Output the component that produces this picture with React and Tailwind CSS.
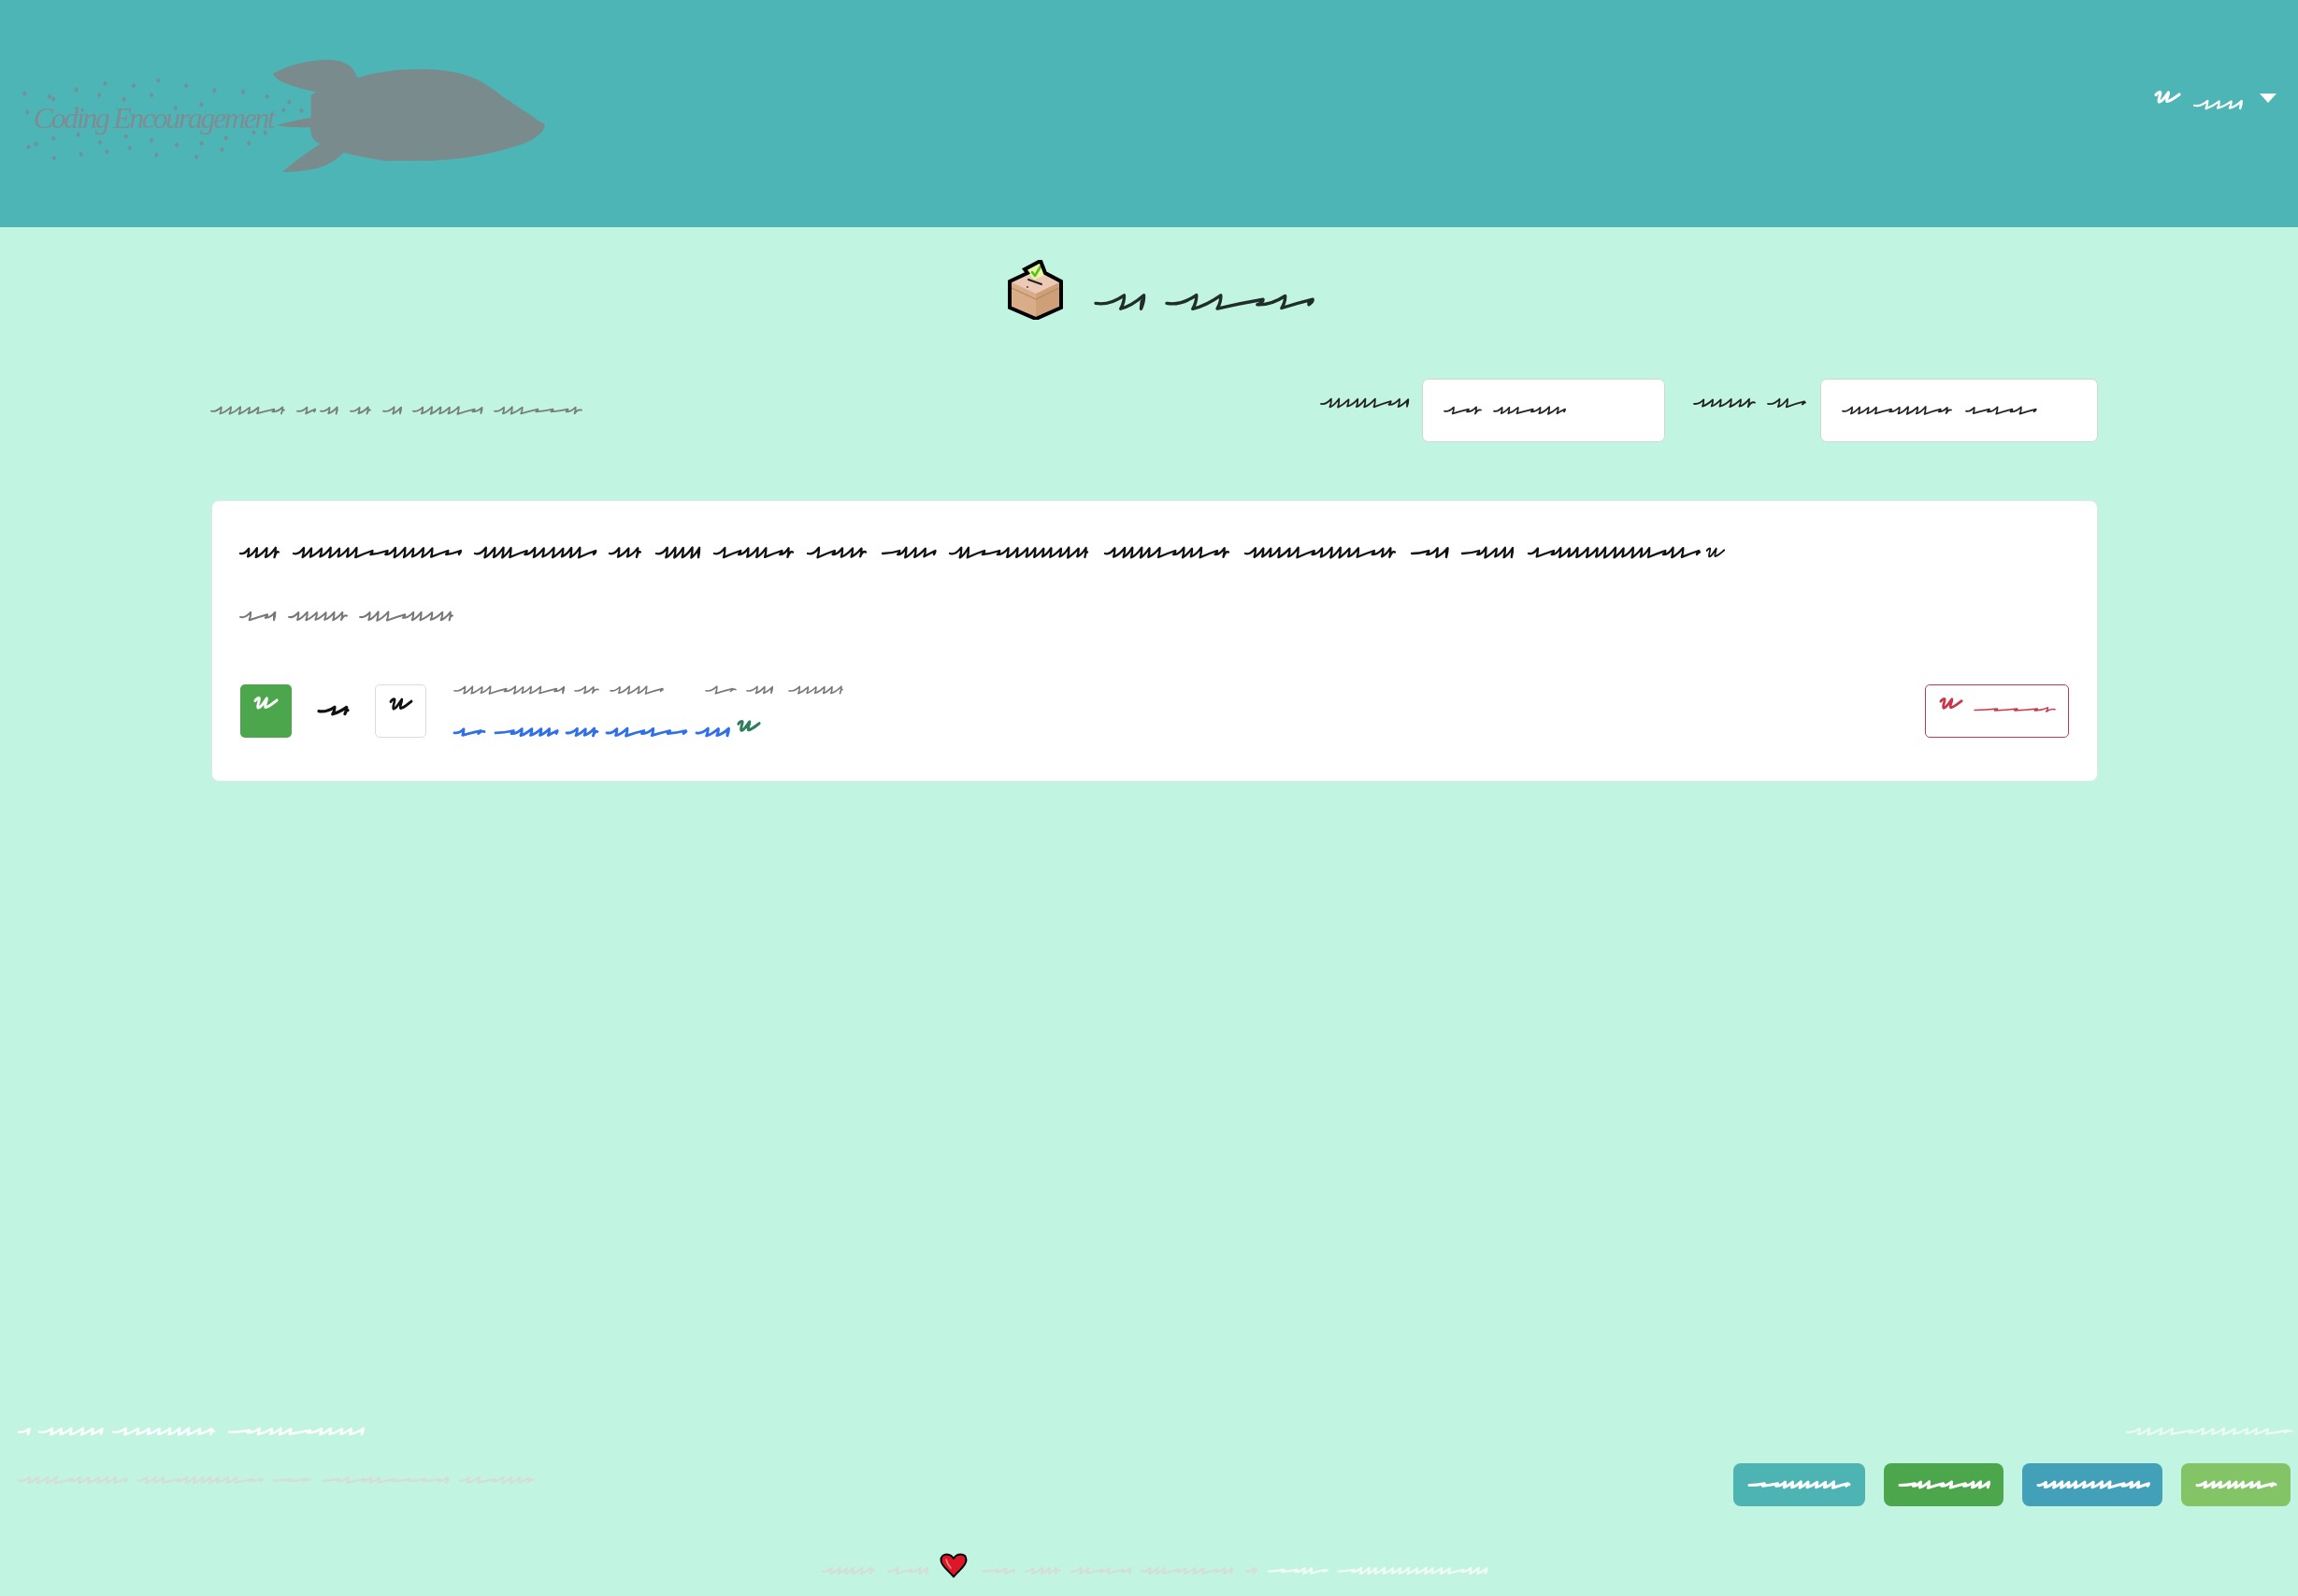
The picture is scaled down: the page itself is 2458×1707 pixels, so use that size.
import React from "react";

function rnd(s) {
  const v = Math.sin(s * 12.9898 + 4.1414) * 43758.5453;
  return v - Math.floor(v);
}

function wordPath(x0, x1, cy, amp, period, seed) {
  const base = period * 1.05;
  let x = x0;
  let i = 0;
  let d = `M${x0.toFixed(1)} ${(cy + amp * 0.2).toFixed(1)}`;
  while (x1 - x > base * 0.8) {
    const flat = rnd(seed * 2 + i * 2.3) < 0.22;
    const a = amp * (flat ? 0.4 : 0.85 + rnd(seed + i * 3.1) * 0.25);
    const s = Math.min(base * (flat ? 1.7 : 0.85 + rnd(seed + i * 1.7) * 0.3), x1 - x);
    d += ` Q${(x + s * 0.55).toFixed(1)} ${(cy + a * 0.55).toFixed(1)} ${(x + s * 1.14).toFixed(1)} ${(cy - a).toFixed(1)}`;
    d += ` Q${(x + s * 1.16).toFixed(1)} ${(cy - a * 0.1).toFixed(1)} ${(x + s).toFixed(1)} ${(cy + a).toFixed(1)}`;
    x += s;
    i++;
  }
  d += ` Q${((x + x1) / 2).toFixed(1)} ${(cy - amp * 0.5).toFixed(1)} ${x1.toFixed(1)} ${(cy - amp * 0.1).toFixed(1)}`;
  return d;
}

function Line({ words, color = "#222", sw = 2, amp = 3.5, period = 8, h = 16 }) {
  const o = words[0][0];
  const w = words[words.length - 1][1] - o;
  return (
    <svg width={w} height={h} viewBox={`0 0 ${w} ${h}`} className="block shrink-0 overflow-visible">
      {words.map(([a, b], i) => (
        <path
          key={i}
          d={wordPath(a - o, b - o, h / 2, amp, period, a * 0.37 + b * 0.11)}
          fill="none"
          stroke={color}
          strokeWidth={sw}
          strokeLinecap="round"
          strokeLinejoin="round"
        />
      ))}
    </svg>
  );
}

function Glyph({ color, w = 27, h = 14, sw = 3.4 }) {
  return (
    <svg width={w} height={h} viewBox="0 0 28 14" preserveAspectRatio="none" className="block shrink-0 overflow-visible">
      <path
        d="M1 4.500 C2.500 2.500 5 1 6 2 C6.500 4.500 3 10 4.500 12 C8 12.500 12 5 15 2 C15.500 5 11.500 10 13.500 11.500 C17 11.500 22 7.500 27 4"
        fill="none"
        stroke={color}
        strokeWidth={sw}
        strokeLinecap="round"
        strokeLinejoin="round"
      />
    </svg>
  );
}

const stars = [
  [65, 300], [130, 310], [200, 288], [275, 268], [350, 275], [415, 258], [488, 275], [562, 290], [637, 295], [700, 310],
  [758, 328], [140, 318], [260, 305], [325, 318], [397, 305], [460, 347], [528, 335], [743, 353], [790, 355], [72, 360],
  [140, 443], [205, 432], [330, 437], [262, 457], [397, 450], [463, 465], [528, 460], [592, 443], [652, 460], [665, 425],
  [695, 425], [75, 472], [95, 462], [142, 507], [212, 495], [280, 487], [340, 475], [410, 497], [515, 503], [582, 480],
];

function Logo() {
  return (
    <div className="relative w-[640px] h-[243px] shrink-0">
      <svg width="640" height="243" viewBox="0 0 1568 729" preserveAspectRatio="none" className="block">
        <path
          d="M715 237 C745 215 800 192 860 192 C895 192 925 205 937 250 C980 232 1040 222 1100 222 C1170 222 1215 235 1250 255 C1290 280 1310 305 1330 320 C1370 352 1400 378 1428 400 C1425 425 1405 445 1370 462 C1300 490 1220 512 1130 515 L1010 516 C970 510 930 498 900 490 C880 515 860 530 830 540 C800 548 770 552 740 552 C760 530 790 500 840 462 C825 455 815 445 813 408 C780 410 750 408 725 402 C755 392 790 382 815 378 L815 305 L830 295 C800 288 760 275 735 260 C725 252 718 245 715 237 Z"
          fill="#798b8c"
        />
        {stars.map(([x, y], i) => (
          <path
            key={i}
            d={`M${x} ${y - 9} L${x + 6} ${y} L${x} ${y + 9} L${x - 6} ${y} Z`}
            fill="#73909a"
          />
        ))}
      </svg>
      <div className="absolute left-[36px] top-[108px] text-[32px] leading-[36px] italic text-[#7c8f97] whitespace-nowrap tracking-[-2.4px] font-['Liberation_Serif',serif]">
        Coding Encouragement
      </div>
    </div>
  );
}

function BallotBox() {
  return (
    <svg width="60" height="64" viewBox="18 12 60 64" preserveAspectRatio="none" className="block shrink-0">
      <polygon points="22,36 48,24 73,36 73,62 48,74 22,62" fill="#d8ad88" />
      <polygon points="48,48 73,36 73,62 48,74" fill="#cf9f78" />
      <polygon points="22,36 48,24 73,36 48,48" fill="#ecc9b4" />
      <path d="M22 42 L48 54 L73 42" fill="none" stroke="#b58a66" strokeWidth="1.200" />
      <polygon points="38,24 52,16 58,28 46,33" fill="#e9f7a4" />
      <path d="M44 25 L47 29 L53 19" fill="none" stroke="#58bd26" strokeWidth="2.600" strokeLinecap="round" strokeLinejoin="round" />
      <path d="M40 33 L54 38" stroke="#222" strokeWidth="2" strokeLinecap="round" />
      <circle cx="39" cy="41" r="1" fill="#444" />
      <path
        d="M36 22 L53 13 L58 26 L75 35 L75 63 L48 75 L20 63 L20 35 L39 26 Z"
        fill="none"
        stroke="#000"
        strokeWidth="4"
        strokeLinejoin="miter"
      />
    </svg>
  );
}

function Heart() {
  return (
    <svg width="30" height="27" viewBox="0 0 30 27" className="block shrink-0">
      <path d="M15 25.500 C10 19 1.500 14 1.500 7.500 C1.500 3.500 4.500 1.500 7.500 1.500 C11 1.500 13.500 3.500 15 6 C16.500 3.500 19 1.500 22.500 1.500 C26 1.500 28.500 3.500 28.500 7.500 C28.500 14 20 19 15 25.500 Z" fill="#dd1729" stroke="#000" strokeWidth="2" strokeLinejoin="round" />
      <path d="M7 7 C8 11 10 14 12 16" fill="none" stroke="#f08a80" strokeWidth="1.600" strokeLinecap="round" />
    </svg>
  );
}

function FooterButton({ bg, w, words }) {
  return (
    <div className={`h-[46px] rounded-lg flex items-center justify-center ${bg} ${w}`}>
      <Line words={words} color="#fff" sw={3} amp={3} period={8} />
    </div>
  );
}

export default function App() {
  return (
    <div className="min-h-[1707px] bg-[#c1f5e1] flex flex-col font-['Liberation_Sans',sans-serif]">
      <header className="h-[243px] bg-[#4db5b5] flex justify-between">
        <Logo />
        <div className="flex items-start pt-[97px] pr-[23px]">
          <Glyph color="#fff" w={27} h={14} sw={3.2} />
          <div className="ml-[15px] mt-[7px]">
            <Line words={[[2347, 2397]]} color="#fff" sw={2.2} amp={4} period={11} />
          </div>
          <svg width="18" height="10" viewBox="0 0 18 10" className="ml-[20px] mt-[3px] block">
            <polygon points="0,0 18,0 9,10" fill="#fff" />
          </svg>
        </div>
      </header>

      <main className="ml-[226px] w-[2018px] flex flex-col">
        <div className="pt-[35px] pl-[8px] flex justify-center items-center gap-[34px]">
          <BallotBox />
          <div className="mt-[25px]">
            <Line words={[[1172, 1222], [1248, 1400]]} color="#1f2e2b" sw={3.4} amp={7} period={24} h={20} />
          </div>
        </div>

        <div className="mt-[63px] h-[68px] flex items-center justify-between">
          <Line
            words={[[226, 304], [318, 336], [343, 361], [375, 396], [410, 428], [442, 515], [529, 622]]}
            color="#777f7c"
            sw={1.8}
            amp={3.6}
            period={9}
          />
          <div className="flex items-center">
            <div className="mb-[16px]">
              <Line words={[[1414, 1506]]} color="#222" sw={1.8} amp={4.4} period={9} />
            </div>
            <div className="ml-[16px] w-[260px] h-[68px] bg-white border border-[#d0d8d5] rounded-[7px] flex items-center pl-[23px]">
              <Line words={[[1545, 1584], [1598, 1673]]} color="#222" sw={1.7} amp={3.6} period={8.5} />
            </div>
            <div className="ml-[31px] mb-[16px]">
              <Line words={[[1812, 1877], [1891, 1931]]} color="#222" sw={1.8} amp={4} period={9.5} />
            </div>
            <div className="ml-[16px] w-[297px] h-[68px] bg-white border border-[#d0d8d5] rounded-[7px] flex items-center pl-[23px]">
              <Line words={[[1970, 2086], [2102, 2175]]} color="#222" sw={1.7} amp={3.6} period={8.5} />
            </div>
          </div>
        </div>

        <section className="mt-[62px] h-[301px] bg-white rounded-lg border border-[#dfe8e4] px-[30px] pt-[47px] flex flex-col">
          <div className="flex items-center">
            <Line
              words={[
                [257, 298], [314, 491], [508, 635], [652, 685], [702, 747], [764, 848], [864, 926], [944, 999],
                [1016, 1163], [1182, 1314], [1332, 1492], [1510, 1547], [1564, 1618], [1635, 1818],
              ]}
              color="#111"
              sw={2.3}
              amp={5}
              period={9}
            />
            <div className="ml-[7px]">
              <Glyph color="#111" w={20} h={12} sw={2.4} />
            </div>
          </div>
          <div className="mt-[52px]">
            <Line words={[[257, 293], [309, 371], [385, 484]]} color="#777" sw={2} amp={4.4} period={9.5} />
          </div>

          <div className="mt-[65px] flex justify-between">
            <div className="flex">
              <div className="w-[55px] h-[57px] rounded-[5px] bg-[#4ca64c] flex justify-center pt-[13px]">
                <Glyph color="#fff" w={25} h={14} sw={3.2} />
              </div>
              <div className="ml-[29px] mt-[20px]">
                <Line words={[[341, 372]]} color="#111" sw={3.2} amp={3.6} period={13} />
              </div>
              <div className="ml-[29px] w-[55px] h-[57px] rounded-[5px] bg-white border border-[#dcdcdc] flex justify-center pt-[13px]">
                <Glyph color="#111" w={24} h={14} sw={3} />
              </div>
              <div className="ml-[30px] flex flex-col">
                <Line
                  words={[[485, 601], [614, 639], [652, 708], [754, 786], [798, 824], [843, 900]]}
                  color="#777"
                  sw={1.6}
                  amp={3.6}
                  period={9}
                  h={12}
                />
                <div className="mt-[33px] flex items-start">
                  <Line
                    words={[[485, 517], [529, 594], [605, 638], [648, 733], [744, 777]]}
                    color="#2f6fe8"
                    sw={2.8}
                    amp={3.8}
                    period={9.5}
                    h={12}
                  />
                  <div className="ml-[11px] -mt-[7px]">
                    <Glyph color="#2e7d5b" w={24} h={13} sw={3.4} />
                  </div>
                </div>
              </div>
            </div>
            <div className="w-[154px] h-[57px] rounded-[5px] border border-[#bd3b52] flex items-start pl-[15px] pt-[13px]">
              <Glyph color="#c9374a" w={24} h={13} sw={3.2} />
              <div className="ml-[13px] mt-[7px]">
                <Line words={[[2111, 2197]]} color="#c9374a" sw={1.5} amp={2.2} period={12} h={12} />
              </div>
            </div>
          </div>
        </section>
      </main>

      <footer className="mt-auto pb-[19px] flex flex-col">
        <div className="flex justify-between items-start pl-[20px] pr-[7px]">
          <div className="flex flex-col">
            <Line words={[[20, 30], [42, 108], [121, 229], [245, 387]]} color="#ffffff" sw={2.4} amp={3.2} period={11} />
            <div className="mt-[36px]">
              <Line
                words={[[20, 134], [147, 279], [293, 332], [345, 480], [492, 571]]}
                color="#d6dcd8"
                sw={2.2}
                amp={3}
                period={9}
              />
            </div>
          </div>
          <div className="flex flex-col items-end">
            <Line words={[[2275, 2451]]} color="#eefaf5" sw={2.2} amp={3} period={11} />
            <div className="mt-[26px] mr-[1px] flex gap-[20px]">
              <FooterButton bg="bg-[#4db3b3]" w="w-[141px]" words={[[1871, 1978]]} />
              <FooterButton bg="bg-[#4ca64c]" w="w-[128px]" words={[[2031, 2126]]} />
              <FooterButton bg="bg-[#42a1b8]" w="w-[150px]" words={[[2180, 2297]]} />
              <FooterButton bg="bg-[#83c566]" w="w-[117px]" words={[[2350, 2434]]} />
            </div>
          </div>
        </div>

        <div className="mt-[50px] pl-[880px] flex items-end">
          <Line words={[[880, 935], [950, 991]]} color="#d6dcd8" sw={2.2} amp={3} period={8} />
          <div className="ml-[14px] mr-[16px]">
            <Heart />
          </div>
          <Line
            words={[[1051, 1084], [1097, 1134], [1146, 1209], [1221, 1318], [1333, 1344]]}
            color="#d6dcd8"
            sw={2.2}
            amp={3}
            period={8}
          />
          <div className="ml-[13px]">
            <Line words={[[1357, 1420], [1432, 1589]]} color="#f2fbf7" sw={2.2} amp={3} period={8} />
          </div>
        </div>
      </footer>
    </div>
  );
}
